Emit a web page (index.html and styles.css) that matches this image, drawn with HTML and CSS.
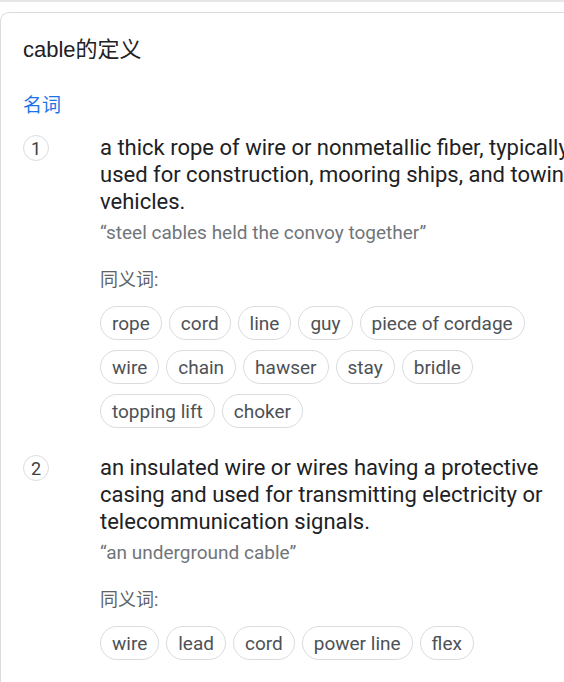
FILE: index.html
```html
<!DOCTYPE html>
<html lang="zh">
<head>
<meta charset="utf-8">
<link rel="stylesheet" href="styles.css">
</head>
<body>
<div class="topline"></div>
<div class="card">
  <div class="title">cable的定义</div>
  <div class="pos">名词</div>
  <div class="sense">
    <div class="num"><span class="circle">1</span></div>
    <div class="body">
      <div class="def">a thick rope of wire or nonmetallic fiber, typically used for construction, mooring ships, and towing vehicles.</div>
      <div class="example">“steel cables held the convoy together”</div>
      <div class="synlabel">同义词:</div>
      <div class="chips">
        <span class="chip">rope</span><span class="chip">cord</span><span class="chip">line</span><span class="chip">guy</span><span class="chip">piece of cordage</span>
        <span class="chip">wire</span><span class="chip">chain</span><span class="chip">hawser</span><span class="chip">stay</span><span class="chip">bridle</span>
        <span class="chip">topping lift</span><span class="chip">choker</span>
      </div>
    </div>
  </div>
  <div class="sense">
    <div class="num"><span class="circle">2</span></div>
    <div class="body">
      <div class="def">an insulated wire or wires having a protective casing and used for transmitting electricity or telecommunication signals.</div>
      <div class="example">“an underground cable”</div>
      <div class="synlabel">同义词:</div>
      <div class="chips">
        <span class="chip">wire</span><span class="chip">lead</span><span class="chip">cord</span><span class="chip">power line</span><span class="chip">flex</span>
      </div>
    </div>
  </div>
</div>
</body>
</html>
```
FILE: styles.css
```css
html, body {
  margin: 0;
  padding: 0;
  background: #fff;
}
body {
  overflow: hidden;
  font-family: Roboto, "Noto Sans CJK SC", sans-serif;
  color: #202124;
}
.topline {
  height: 2px;
  background: #e6e6e6;
}
.card {
  margin-top: 10px;
  border: 1px solid #dadce0;
  border-right: none;
  border-radius: 9px 0 0 9px;
  padding: 0 0 80px 22px;
}
.title {
  padding-top: 23px;
  font-size: 22px;
  line-height: 28px;
  color: #202124;
  font-family: "Liberation Sans", "Noto Sans CJK SC", sans-serif;
}
.pos {
  margin-top: 29px;
  font-size: 19px;
  line-height: 26px;
  color: #1a73e8;
}
.sense {
  display: flex;
  margin-top: 15px;
}
.sense + .sense {
  margin-top: 26px;
}
.num {
  width: 77px;
  flex: none;
}
.circle {
  display: flex;
  align-items: center;
  justify-content: center;
  width: 26px;
  height: 26px;
  margin-top: 1px;
  border: 1px solid #dadce0;
  border-radius: 50%;
  box-sizing: border-box;
  font-size: 18px;
  color: #3c4043;
}
.body {
  width: 484px;
  flex: none;
}
.def {
  font-size: 22px;
  line-height: 27px;
  color: #202124;
}
.example {
  margin-top: 6px;
  font-size: 19px;
  line-height: 24px;
  color: #70757a;
}
.synlabel {
  margin-top: 23px;
  font-size: 18px;
  line-height: 24px;
  color: #5f6368;
}
.chips {
  margin-top: 14px;
  display: flex;
  flex-wrap: wrap;
  column-gap: 7px;
  row-gap: 10px;
}
.chip {
  display: inline-flex;
  align-items: center;
  height: 34px;
  padding: 0 11px;
  border: 1px solid #dadce0;
  border-radius: 17px;
  box-sizing: border-box;
  font-size: 19px;
  color: #4d5156;
  white-space: nowrap;
}
```
